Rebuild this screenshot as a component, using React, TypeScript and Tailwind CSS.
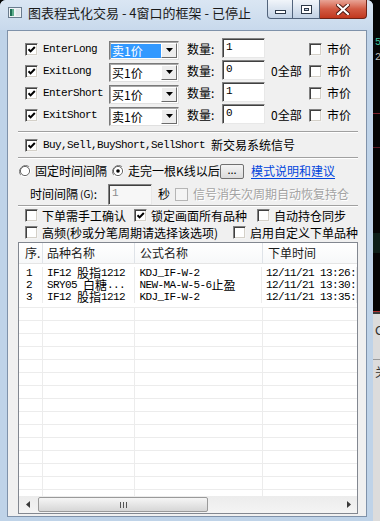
import type { ReactNode } from 'react'

// SimSun-like look: half width latin in mono, CJK at 12px
const MONO = "font-['Liberation_Mono',monospace] text-[11px] tracking-[-0.6px]"
const CJK = "font-['Noto_Sans_CJK_SC',sans-serif] text-[12px] tracking-normal"
const CJK_RE = /[\u3000-\u9fff\uff00-\uffef]/

function Mix({ text }: { text: string }) {
  const parts = text.match(/[\u3000-\u9fff\uff00-\uffef]+|[^\u3000-\u9fff\uff00-\uffef]+/g) ?? []
  return (
    <>
      {parts.map((p, i) =>
        CJK_RE.test(p) ? (
          <span key={i} className={`${CJK} inline-block h-[12px] leading-[12px]`}>{p}</span>
        ) : (
          <span key={i} className={`${MONO} inline-block h-[12px] leading-[12px] whitespace-pre`}>{p}</span>
        )
      )}
    </>
  )
}

function Check({ checked, disabled }: { checked?: boolean; disabled?: boolean }) {
  return (
    <span
      className={`w-[13px] h-[13px] shrink-0 flex items-center justify-center border ${
        disabled
          ? 'border-[#b5b5b5] bg-[#f4f4f4]'
          : 'bg-white border-t-[#808080] border-l-[#808080] border-b-[#f4f4f4] border-r-[#f4f4f4] shadow-[inset_1px_1px_0_#404040,inset_-1px_-1px_0_#d4d0c8]'
      }`}
    >
      {checked && (
        <svg viewBox="0 0 9 9" className="w-[9px] h-[9px]">
          <path d="M1.5 4.2 L3.6 6.4 L7.8 2" stroke="#000" strokeWidth="2" fill="none" />
        </svg>
      )}
    </span>
  )
}

function Radio({ checked }: { checked?: boolean }) {
  return (
    <svg viewBox="0 0 12 12" className="w-[12px] h-[12px] shrink-0">
      <path d="M10.2 1.8 A6 6 0 0 0 1.8 10.2" stroke="#808080" fill="none" />
      <path d="M1.8 10.2 A6 6 0 0 0 10.2 1.8" stroke="#ffffff" fill="none" />
      <circle cx="6" cy="6" r="4.6" fill="#fff" stroke="#404040" strokeWidth="0.8" />
      {checked && <circle cx="6" cy="6" r="1.8" fill="#000" />}
    </svg>
  )
}

function Combo({ value, selected }: { value: string; selected?: boolean }) {
  return (
    <div className="w-[70px] h-[19px] mt-[2px] flex bg-white border border-t-[#7a7a7a] border-l-[#7a7a7a] border-r-[#e0e0e0] border-b-[#e0e0e0] shadow-[inset_1px_1px_0_#a8a8a8]">
      <div className="flex-1 flex items-center pl-[1px] pt-[1px]">
        <span className={`h-[14px] w-full flex items-center pl-[1px] ${selected ? 'bg-[#3399ff] text-white' : ''}`}>{value}</span>
      </div>
      <div className="w-[16px] my-[1px] mr-[1px] bg-[#ededed] border border-t-white border-l-white border-r-[#6b6b6b] border-b-[#6b6b6b] flex items-center justify-center">
        <svg viewBox="0 0 7 4" className="w-[7px] h-[4px]">
          <path d="M0 0h7L3.5 4z" fill="#000" />
        </svg>
      </div>
    </div>
  )
}

function Field({ value, className, disabled }: { value: string; className: string; disabled?: boolean }) {
  return (
    <div
      className={`flex items-start pl-[3px] pt-[3px] border border-t-[#828282] border-l-[#828282] border-r-[#e8e8e8] border-b-[#e8e8e8] shadow-[inset_1px_1px_0_#404040] ${
        disabled ? 'bg-[#f7f7f7] text-[#8c8c8c]' : 'bg-white'
      } ${className}`}
    >
      <span className={MONO}>{value}</span>
    </div>
  )
}

function Etched() {
  return <div className="h-0 border-t border-b border-t-[#a0a0a0] border-b-white" />
}

function Cell({ w, children, pl }: { w?: string; children?: ReactNode; pl: string }) {
  return (
    <div className={`${w ?? 'flex-1'} ${pl} h-full border-r border-[#ececec] whitespace-nowrap overflow-x-clip flex items-center`}>
      {children}
    </div>
  )
}

const orders = [
  { name: 'EnterLong', price: '卖1价', qty: '1', all: false, sel: true },
  { name: 'ExitLong', price: '买1价', qty: '0', all: true, sel: false },
  { name: 'EnterShort', price: '买1价', qty: '1', all: false, sel: false },
  { name: 'ExitShort', price: '卖1价', qty: '0', all: true, sel: false },
]

const rows = [
  ['1', 'IF12 股指1212', 'KDJ_IF-W-2', '12/11/21 13:26:'],
  ['2', 'SRY05 白糖...', 'NEW-MA-W-5-6止盈', '12/11/21 13:30:'],
  ['3', 'IF12 股指1212', 'KDJ_IF-W-2', '12/11/21 13:35:'],
]

function TitleBar() {
  return (
    <div className="h-[30px] shrink-0 flex items-start bg-gradient-to-b from-[#dae6f3] to-[#c8d9ec]">
      <svg viewBox="0 0 14 11" className="w-[14px] h-[11px] ml-[8px] mt-[7px]">
        <rect x="0.5" y="0.5" width="13" height="10" fill="#eef2f5" stroke="#6a7c8e" />
        <rect x="2" y="2" width="2" height="7" fill="#1f6e55" />
        <rect x="4" y="2" width="2" height="7" fill="#5fae8c" />
        <rect x="8" y="2" width="4" height="7" fill="#dfe5ea" />
      </svg>
      <span className="ml-[6px] mt-[6px] text-[13px] leading-[14px] text-[#1a1a1a]">图表程式化交易 - 4窗口的框架 - 已停止</span>
      <div className="ml-auto mr-[6px] flex h-[19px]">
        <div className="w-[26px] h-full rounded-bl-[4px] border border-t-0 border-[#52647c] bg-gradient-to-b from-[#f1f5fa] to-[#c2d2e5] flex items-end justify-center pb-[4px]">
          <span className="w-[11px] h-[4px] border border-[#2c3848] bg-white" />
        </div>
        <div className="w-[27px] h-full border border-t-0 border-l-0 border-[#52647c] bg-gradient-to-b from-[#f1f5fa] to-[#c2d2e5] flex items-center justify-center">
          <span className="w-[11px] h-[9px] border border-[#2c3848] bg-white flex items-center justify-center">
            <span className="w-[5px] h-[3px] border border-[#2c3848] bg-[#c2d2e5]" />
          </span>
        </div>
        <div className="w-[47px] h-full rounded-br-[4px] border border-t-0 border-l-0 border-[#6e2317] bg-gradient-to-b from-[#e8a496] via-[#d25a43] to-[#c1371d] flex items-center justify-center">
          <svg viewBox="0 0 14 11" className="w-[14px] h-[11px]">
            <path d="M2 1 L12 10 M12 1 L2 10" stroke="#4a1710" strokeWidth="4" strokeLinecap="square" />
            <path d="M2 1 L12 10 M12 1 L2 10" stroke="#ffffff" strokeWidth="2.2" strokeLinecap="square" />
          </svg>
        </div>
      </div>
    </div>
  )
}

function RightStrip() {
  return (
    <div className="w-[7px] h-full flex flex-col bg-[#050505] overflow-hidden leading-none">
      <div className="h-[38px] shrink-0" />
      <span className="h-[15px] shrink-0 pl-[2px] text-[10px] text-[#3fc4a0] font-['Liberation_Mono',monospace]">5</span>
      <span className="h-[60px] shrink-0 pl-[2px] text-[10px] text-[#bbbbbb] font-['Liberation_Mono',monospace]">2</span>
      <div className="h-[1px] shrink-0 bg-[#7a1f2a]" />
      <div className="h-[33px] shrink-0" />
      <div className="h-[1px] shrink-0 bg-[#5a1a22]" />
      <div className="h-[85px] shrink-0" />
      <div className="h-[20px] shrink-0 bg-[#0d1f18]" />
      <div className="h-[58px] shrink-0" />
      <div className="h-[1px] shrink-0 bg-[#b03030]" />
      <div className="h-[2px] shrink-0 bg-[#3a3a3a]" />
      <div className="flex-1 bg-[#dcdcdc] flex flex-col">
        <span className="mt-[10px] pl-[2px] text-[13px] text-[#333] font-['Liberation_Sans',sans-serif]">C</span>
        <div className="mt-[22px] h-[1px] bg-[#9a9a9a]" />
        <span className="mt-[6px] pl-[2px] text-[12px] text-[#333]">关</span>
      </div>
    </div>
  )
}

export default function App() {
  return (
    <div className="w-[380px] h-[521px] flex bg-[#050505] overflow-hidden font-['Noto_Sans_CJK_SC',sans-serif] text-[12px] leading-none text-black select-none">
      <div className="w-[373px] h-full shrink-0 flex flex-col bg-[#bfd3e8] rounded-t-[6px] overflow-hidden">
        <TitleBar />
        <div className="flex-1 min-h-0 ml-[7px] mr-[6px] mb-[4px] border border-[#7f92aa] bg-[#f0f0f0] flex flex-col pt-[7px] pl-[10px] pr-[8px] pb-[2px]">
          {/* 下单方式 */}
          {orders.map((o) => (
            <div key={o.name} className="h-[22px] shrink-0 flex items-center pl-[7px]">
              <div className="w-[84px] flex items-center">
                <Check checked />
                <span className={`ml-[5px] ${MONO}`}>{o.name}</span>
              </div>
              <Combo value={o.price} selected={o.sel} />
              <span className="w-[43px] pl-[8px]">数量:</span>
              <Field value={o.qty} className="w-[43px] h-[20px] mb-[2px]" />
              <span className="w-[44px] pl-[6px]">{o.all ? '0全部' : ''}</span>
              <Check />
              <span className="ml-[5px]">市价</span>
            </div>
          ))}
          <div className="mt-[5px] shrink-0">
            <Etched />
          </div>
          <div className="h-[24px] shrink-0 flex items-center pl-[7px]">
            <Check checked />
            <span className="ml-[5px] flex items-center">
              <Mix text="Buy,Sell,BuyShort,SellShort 新交易系统信号" />
            </span>
          </div>
          <Etched />
          {/* 运行方式 */}
          <div className="h-[24px] shrink-0 flex items-center pl-[1px]">
            <Radio />
            <span className="ml-[4px]">固定时间间隔</span>
            <span className="ml-[5px]">
              <Radio checked />
            </span>
            <span className="ml-[4px] w-[92px]">走完一根K线以后</span>
            <button className="w-[24px] h-[15px] rounded-[2px] border border-[#707070] bg-gradient-to-b from-[#f4f4f4] to-[#dcdcdc] flex items-center justify-center text-[11px] leading-none pb-[3px]">
              ...
            </button>
            <span className="ml-[7px] text-[#0044dd] underline underline-offset-2">模式说明和建议</span>
          </div>
          <div className="h-[22px] shrink-0 flex items-center pl-[12px]">
            <span className="w-[78px] flex items-center">
              时间间隔<span className="text-[10px] ml-[2px]">(G)</span>:
            </span>
            <Field value="1" disabled className="w-[44px] h-[21px]" />
            <span className="ml-[6px]">秒</span>
            <span className="ml-[5px]">
              <Check disabled />
            </span>
            <span className="ml-[5px] text-[#a3a3a3] [text-shadow:1px_1px_0_#ffffff]">信号消失次周期自动恢复持仓</span>
          </div>
          <Etched />
          {/* 选项 */}
          <div className="h-[17px] shrink-0 flex items-center pl-[7px]">
            <Check />
            <span className="ml-[4px] w-[92px]">下单需手工确认</span>
            <Check checked />
            <span className="ml-[4px] w-[106px]">锁定画面所有品种</span>
            <Check />
            <span className="ml-[4px]">自动持仓同步</span>
          </div>
          <div className="h-[17px] shrink-0 flex items-center pl-[7px]">
            <Check />
            <span className="ml-[4px] w-[191px]">高频(秒或分笔周期请选择该选项)</span>
            <Check />
            <span className="ml-[4px] whitespace-nowrap">启用自定义下单品种</span>
          </div>
          {/* 下单列表 */}
          <div className="flex-1 min-h-0 mt-[1px] border border-[#828790] bg-white flex flex-col overflow-hidden">
            <div className="h-[21px] shrink-0 flex border-b border-[#e5e5e5] bg-gradient-to-b from-white to-[#f7f8f9] text-[#1a1a1a]">
              <div className="w-[24px] pl-[6px] border-r border-[#dfe3e8] flex items-center">序.</div>
              <div className="w-[92px] pl-[4px] border-r border-[#dfe3e8] flex items-center">品种名称</div>
              <div className="w-[128px] pl-[5px] border-r border-[#dfe3e8] flex items-center">公式名称</div>
              <div className="flex-1 pl-[5px] flex items-center">下单时间</div>
            </div>
            <div className="h-[44px] shrink-0 pt-[3px] border-b border-[#ececec] flex flex-col">
              {rows.map((r) => (
                <div key={r[0]} className="h-[12px] shrink-0 flex">
                  <Cell w="w-[24px]" pl="pl-[7px]"><Mix text={r[0]} /></Cell>
                  <Cell w="w-[92px]" pl="pl-[4px]"><Mix text={r[1]} /></Cell>
                  <Cell w="w-[128px]" pl="pl-[5px]"><Mix text={r[2]} /></Cell>
                  <Cell pl="pl-[4px]"><Mix text={r[3]} /></Cell>
                </div>
              ))}
            </div>
            <div className="flex-1 min-h-0 overflow-hidden flex flex-col">
              {Array.from({ length: 16 }).map((_, i) => (
                <div key={i} className="h-[13px] shrink-0 flex border-b border-[#ececec]">
                  <Cell w="w-[24px]" pl="pl-0" />
                  <Cell w="w-[92px]" pl="pl-0" />
                  <Cell w="w-[128px]" pl="pl-0" />
                  <div className="flex-1" />
                </div>
              ))}
            </div>
            {/* 水平滚动条 */}
            <div className="h-[17px] shrink-0 flex bg-gradient-to-b from-[#ececec] to-[#f4f4f4]">
              <div className="w-[18px] flex items-center justify-center">
                <svg viewBox="0 0 4 7" className="w-[4px] h-[7px]">
                  <path d="M4 0v7L0 3.5z" fill="#3a3a3a" />
                </svg>
              </div>
              <div className="flex-1 flex items-center">
                <div className="ml-[1px] w-[170px] h-[15px] rounded-[2px] border border-[#9a9a9a] bg-gradient-to-b from-[#f6f6f6] to-[#d6d6d6] flex items-center justify-center gap-[2px]">
                  <span className="w-[1px] h-[6px] bg-[#555]" />
                  <span className="w-[1px] h-[6px] bg-[#555]" />
                  <span className="w-[1px] h-[6px] bg-[#555]" />
                </div>
              </div>
              <div className="w-[17px] flex items-center justify-center">
                <svg viewBox="0 0 4 7" className="w-[4px] h-[7px]">
                  <path d="M0 0v7L4 3.5z" fill="#3a3a3a" />
                </svg>
              </div>
            </div>
          </div>
        </div>
      </div>
      <RightStrip />
    </div>
  )
}
